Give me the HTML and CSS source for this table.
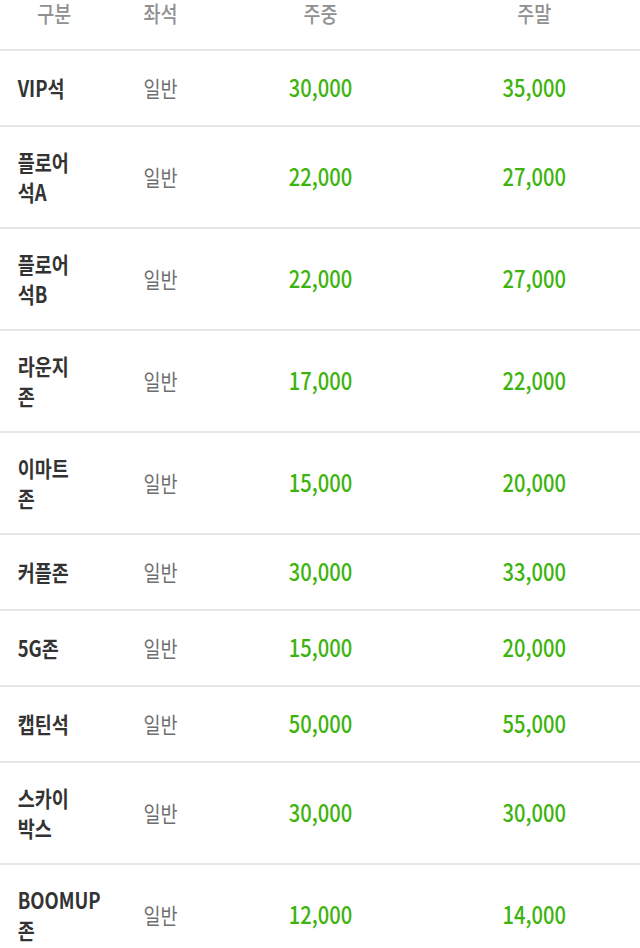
FILE: index.html
```html
<!DOCTYPE html>
<html lang="ko">
<head>
<meta charset="utf-8">
<link rel="stylesheet" href="styles.css">
</head>
<body>
<div class="viewport">
<div class="page">
  <div class="price-table">
    <div class="row head">
      <div class="c1">구분</div>
      <div class="c2">좌석</div>
      <div class="c3">주중</div>
      <div class="c4">주말</div>
    </div>
    <div class="row">
      <div class="c1 name">VIP석</div>
      <div class="c2 type">일반</div>
      <div class="c3 price">30,000</div>
      <div class="c4 price">35,000</div>
    </div>
    <div class="row">
      <div class="c1 name">플로어<br>석A</div>
      <div class="c2 type">일반</div>
      <div class="c3 price">22,000</div>
      <div class="c4 price">27,000</div>
    </div>
    <div class="row">
      <div class="c1 name">플로어<br>석B</div>
      <div class="c2 type">일반</div>
      <div class="c3 price">22,000</div>
      <div class="c4 price">27,000</div>
    </div>
    <div class="row">
      <div class="c1 name">라운지<br>존</div>
      <div class="c2 type">일반</div>
      <div class="c3 price">17,000</div>
      <div class="c4 price">22,000</div>
    </div>
    <div class="row">
      <div class="c1 name">이마트<br>존</div>
      <div class="c2 type">일반</div>
      <div class="c3 price">15,000</div>
      <div class="c4 price">20,000</div>
    </div>
    <div class="row">
      <div class="c1 name">커플존</div>
      <div class="c2 type">일반</div>
      <div class="c3 price">30,000</div>
      <div class="c4 price">33,000</div>
    </div>
    <div class="row">
      <div class="c1 name">5G존</div>
      <div class="c2 type">일반</div>
      <div class="c3 price">15,000</div>
      <div class="c4 price">20,000</div>
    </div>
    <div class="row">
      <div class="c1 name">캡틴석</div>
      <div class="c2 type">일반</div>
      <div class="c3 price">50,000</div>
      <div class="c4 price">55,000</div>
    </div>
    <div class="row">
      <div class="c1 name">스카이<br>박스</div>
      <div class="c2 type">일반</div>
      <div class="c3 price">30,000</div>
      <div class="c4 price">30,000</div>
    </div>
    <div class="row">
      <div class="c1 name">BOOMUP<br>존</div>
      <div class="c2 type">일반</div>
      <div class="c3 price">12,000</div>
      <div class="c4 price">14,000</div>
    </div>
  </div>
</div>
</div>
</body>
</html>
```
FILE: styles.css
```css
html, body {
  margin: 0;
  padding: 0;
  background: #ffffff;
}
.viewport {
  width: 640px;
  overflow: hidden;
}
.page {
  width: 762px;
  transform: scaleX(0.84);
  transform-origin: 0 0;
  font-family: "Noto Sans CJK KR", "Noto Sans", sans-serif;
}
.price-table {
  display: flex;
  flex-direction: column;
}
.row {
  display: grid;
  grid-template-columns: 129px 124px 257px 1fr;
  align-items: center;
  padding: 19px 0 21px;
  min-height: 34px;
  border-bottom: 2px solid #e6e6e6;
}
.row.head {
  padding: 0 0 25px;
  min-height: 24px;
  align-items: start;
  color: #909090;
  font-size: 22px;
  font-weight: 500;
  line-height: 24px;
}
.head > div {
  text-align: center;
}
.c2, .c3, .c4 {
  text-align: center;
}
.name {
  padding-left: 21px;
  font-size: 22px;
  line-height: 30px;
  font-weight: 600;
  color: #333333;
}
.type {
  font-size: 22px;
  line-height: 30px;
  color: #6e6e6e;
}
.price {
  font-size: 24px;
  line-height: 34px;
  font-weight: 500;
  color: #3db30d;
}
```
